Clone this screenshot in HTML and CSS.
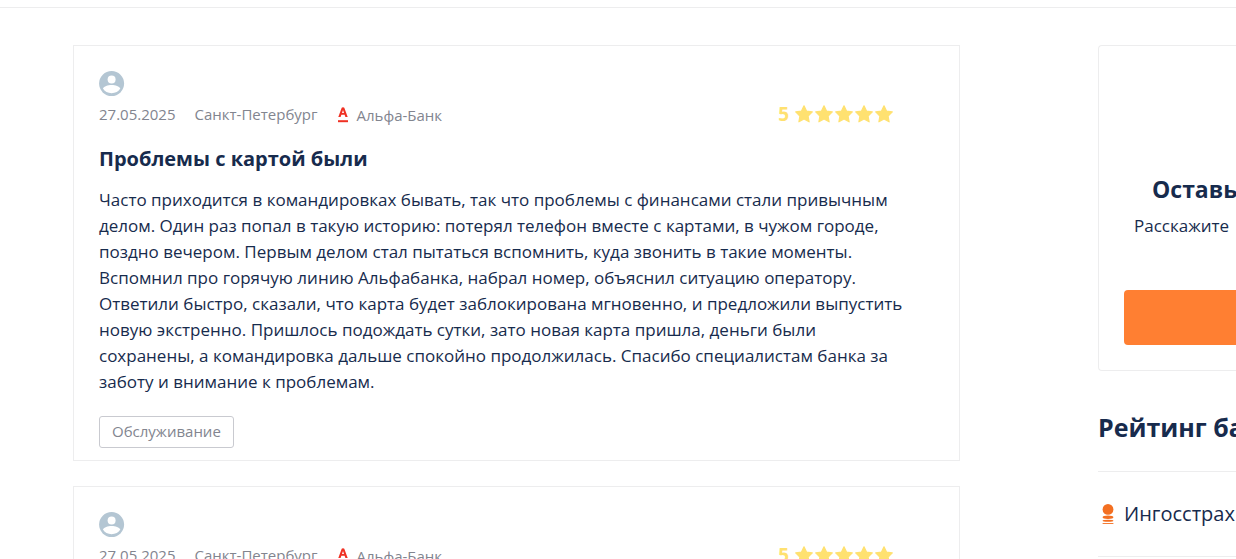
FILE: index.html
```
<!DOCTYPE html>
<html lang="ru">
<head>
<meta charset="utf-8">
<meta name="viewport" content="width=device-width, initial-scale=1">
<title>Отзывы</title>
<link rel="stylesheet" href="styles.css">
</head>
<body>
<svg class="sprite" aria-hidden="true">
  <symbol id="avatar" viewBox="0 0 26 26">
    <circle cx="12.6" cy="12.6" r="12.5" fill="#b4c6d3"/>
    <circle cx="12.6" cy="8.600" r="4" fill="#fff"/>
    <path d="M3.900 17.600C5 15.200 8.700 14 12.600 14s7.600 1.200 8.700 3.600C19.600 20.500 16.400 22.200 12.600 22.200S5.600 20.500 3.900 17.600z" fill="#fff"/>
  </symbol>
  <symbol id="star" viewBox="0 0 20 20">
    <path d="M10 1.800l2.500 5.300 5.800.8-4.200 4.100 1 5.800-5.100-2.800-5.100 2.800 1-5.800L1.700 7.900l5.800-.8z" fill="#ffe170" stroke="#ffe170" stroke-width="1.200" stroke-linejoin="round"/>
  </symbol>
  <symbol id="alfa" viewBox="0 0 12 16">
    <path d="M1 13.200h10v2H1z" fill="#ef3124"/>
    <path fill-rule="evenodd" d="M4.700.8Q5 .2 6 .2t1.300.6L10.700 10H8.400l-.8-2.200H4.400L3.600 10H1.300zM6 3L5 6.100h2z" fill="#ef3124"/>
  </symbol>
</svg>
<header class="topbar"></header>
<div class="page">
  <main class="reviews">
    <article class="card">
      <svg class="avatar"><use href="#avatar"/></svg>
      <div class="meta">
        <time>27.05.2025</time>
        <span>Санкт-Петербург</span>
        <a class="bank" href="#"><svg class="bank-logo"><use href="#alfa"/></svg>Альфа-Банк</a>
        <div class="rating">
          <span class="score">5</span>
          <svg class="star"><use href="#star"/></svg>
          <svg class="star"><use href="#star"/></svg>
          <svg class="star"><use href="#star"/></svg>
          <svg class="star"><use href="#star"/></svg>
          <svg class="star"><use href="#star"/></svg>
        </div>
      </div>
      <h3 class="title">Проблемы с картой были</h3>
      <p class="text">Часто приходится в командировках бывать, так что проблемы с финансами стали привычным делом. Один раз попал в такую историю: потерял телефон вместе с картами, в чужом городе, поздно вечером. Первым делом стал пытаться вспомнить, куда звонить в такие моменты. Вспомнил про горячую линию Альфабанка, набрал номер, объяснил ситуацию оператору. Ответили быстро, сказали, что карта будет заблокирована мгновенно, и предложили выпустить новую экстренно. Пришлось подождать сутки, зато новая карта пришла, деньги были сохранены, а командировка дальше спокойно продолжилась. Спасибо специалистам банка за заботу и внимание к проблемам.</p>
      <a class="tag" href="#">Обслуживание</a>
    </article>
    <article class="card">
      <svg class="avatar"><use href="#avatar"/></svg>
      <div class="meta">
        <time>27.05.2025</time>
        <span>Санкт-Петербург</span>
        <a class="bank" href="#"><svg class="bank-logo"><use href="#alfa"/></svg>Альфа-Банк</a>
        <div class="rating">
          <span class="score">5</span>
          <svg class="star"><use href="#star"/></svg>
          <svg class="star"><use href="#star"/></svg>
          <svg class="star"><use href="#star"/></svg>
          <svg class="star"><use href="#star"/></svg>
          <svg class="star"><use href="#star"/></svg>
        </div>
      </div>
    </article>
  </main>
  <aside class="side">
    <section class="promo">
      <h3 class="promo-title">Оставь</h3>
      <p class="promo-text">Расскажите</p>
      <button class="promo-button" type="button" aria-label="Оставить отзыв"></button>
    </section>
    <h2 class="side-title">Рейтинг ба</h2>
    <ul class="banks">
      <li class="banks-item">
        <svg class="ingo" viewBox="0 0 12 20">
          <circle cx="6" cy="5.400" r="5.400" fill="#f36f21"/>
          <ellipse cx="6" cy="13.200" rx="5.400" ry="1.700" fill="#f36f21"/>
          <ellipse cx="6" cy="16.700" rx="5.400" ry="1" fill="#f36f21"/>
          <path d="M.6 19h10.800v.9H.6z" fill="#f36f21"/>
        </svg>
        <a class="bank-link" href="#">Ингосстрах</a>
      </li>
    </ul>
  </aside>
</div>
</body>
</html>
```
FILE: styles.css
```
* { box-sizing: border-box; }

body {
  margin: 0;
  height: 100vh;
  overflow: hidden;
  background: #fff;
  color: #172b4d;
  font-family: "Open Sans", "Noto Sans", sans-serif;
}

h2, h3, p, ul { margin: 0; padding: 0; }
a { color: inherit; text-decoration: none; }
svg { display: block; flex: none; }
.sprite { position: absolute; width: 0; height: 0; }

.topbar {
  height: 8px;
  border-bottom: 1px solid #ededee;
}

.page {
  display: flex;
  gap: 138px;
  padding: 37px 0 0 73px;
}

.reviews {
  flex: 1;
  min-width: 0;
  display: flex;
  flex-direction: column;
  gap: 25px;
}

.card {
  padding: 25px 25px 12px;
  border: 1px solid #ededee;
}

.avatar { width: 26px; height: 26px; }

.meta {
  display: flex;
  align-items: center;
  gap: 19px;
  margin-top: 4px;
  line-height: 24px;
  font-size: 15px;
  color: #82858f;
}

.bank { display: flex; align-items: center; gap: 8px; padding-top: 2px; }
.bank-logo { width: 12px; height: 16px; }

.rating {
  display: flex;
  align-items: center;
  margin-left: auto;
  margin-right: 40px;
}
.score {
  margin-right: 5px;
  font-size: 19px;
  font-weight: 700;
  color: #ffe170;
}
.star { width: 20px; height: 20px; }

.title {
  margin-top: 18px;
  font-size: 20px;
  line-height: 28px;
  font-weight: 700;
}

.text {
  margin-top: 14px;
  padding-right: 25px;
  font-size: 17px;
  line-height: 26px;
}

.tag {
  display: inline-block;
  margin-top: 21px;
  padding: 0 12px 2px;
  border: 1px solid #c9cad0;
  border-radius: 3px;
  font-size: 15px;
  line-height: 28px;
  color: #82858f;
  vertical-align: top;
}

.side { flex: 0 0 138px; min-width: 0; white-space: nowrap; }

.promo {
  padding: 125px 0 25px 25px;
  border: 1px solid #ededee;
  border-right: 0;
  border-radius: 4px 0 0 4px;
}
.promo-title {
  padding-left: 28px;
  font-size: 23px;
  line-height: 36px;
  overflow: hidden;
}
.promo-text {
  padding: 6px 0 0 10px;
  font-size: 17px;
  line-height: 26px;
}
.promo-button {
  display: block;
  width: 100%;
  height: 55px;
  margin-top: 51px;
  border: 0;
  border-radius: 4px 0 0 4px;
  background: #ff7f32;
}

.side-title {
  margin-top: 37px;
  padding-bottom: 25px;
  font-size: 25px;
  line-height: 38px;
  overflow: hidden;
}

.banks { list-style: none; }
.banks-item {
  display: flex;
  align-items: center;
  gap: 10px;
  height: 85px;
  padding-left: 4px;
  border-top: 1px solid #ededee;
}
.banks::after {
  content: "";
  display: block;
  border-top: 1px solid #ededee;
}
.ingo { width: 12px; height: 20px; }
.bank-link { font-size: 20px; line-height: 28px; }
```
